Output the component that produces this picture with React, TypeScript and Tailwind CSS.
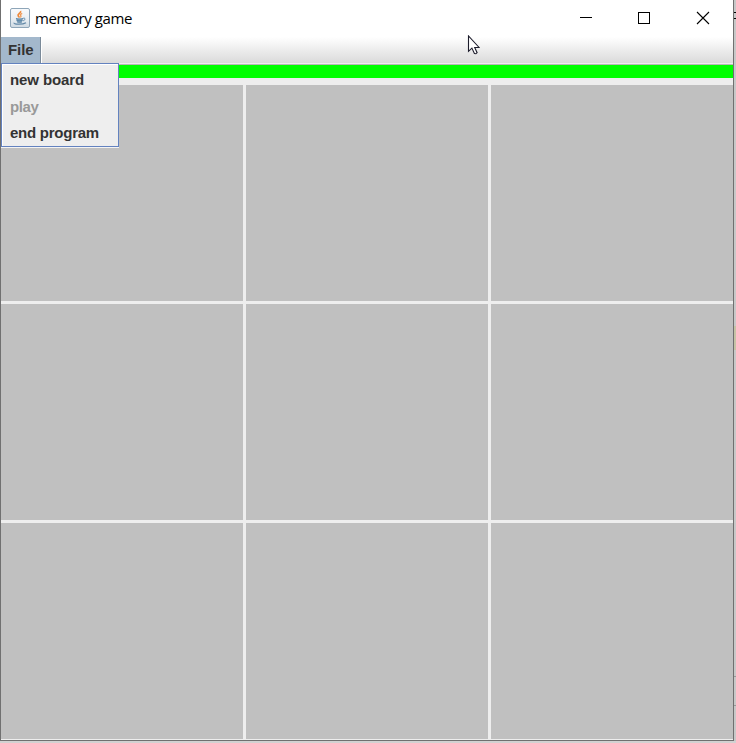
function JavaIcon() {
  return (
    <svg width="20" height="20" viewBox="0 0 20 20" fill="none">
      <defs>
        <linearGradient id="tile" x1="0" y1="0" x2="0" y2="1">
          <stop offset="0" stopColor="#f8fafc" />
          <stop offset="0.55" stopColor="#e9eef3" />
          <stop offset="1" stopColor="#ced9e2" />
        </linearGradient>
      </defs>
      <rect x="0.5" y="0.5" width="19" height="19" rx="1.5" fill="url(#tile)" stroke="#8ea5b8" />
      <path d="M10.5 3c1.2 2-3.3 2.8-2.4 4.6.3.8 1 1.2 1.2 2" stroke="#ee8a3c" strokeWidth="1.7" />
      <path d="M12.2 5.3c-1.6.8-2.2 1.5-1.4 2.4.4.6.2 1.2-.4 1.7" stroke="#f09a58" strokeWidth="1.3" />
      <path d="M6 10.3c2 .7 5 .6 7 0l-1 3.6c-1.6.6-3.4.6-5 0z" fill="#8fabc1" />
      <path d="M6 10.5c2 .7 5 .6 7 0M6.6 12.3c2 .7 4 .6 6 0M7.2 13.9c1.5.5 3.2.5 4.7 0" stroke="#5f88a8" strokeWidth="1.1" />
      <path d="M13.2 10.2c2.4-.6 2.4 1.8 0 2.6" stroke="#5f88a8" />
      <path d="M4.2 14.8c-1 1.8 8.6 2 11.8-.1" stroke="#6288a7" strokeWidth="1.3" />
    </svg>
  );
}

function WindowControls() {
  return (
    <div className="flex">
      <svg width="58" height="36" viewBox="0 0 58 36" shapeRendering="crispEdges">
        <path d="M21 17.5h12" stroke="#000" />
      </svg>
      <svg width="58" height="36" viewBox="0 0 58 36" shapeRendering="crispEdges">
        <rect x="21.5" y="12.5" width="11" height="11" fill="none" stroke="#000" />
      </svg>
      <svg width="58" height="36" viewBox="0 0 58 36">
        <path d="M22 12l12 12M34 12L22 24" stroke="#000" strokeWidth="1.1" />
      </svg>
    </div>
  );
}

function FileMenu() {
  return (
    <div className="absolute left-0 top-[26px] z-10 h-[85px] w-[118px] border-b border-[#f4f4f4] font-['Liberation_Sans',Arial,sans-serif] text-[15px] font-bold leading-[17px] text-[#333333]">
      <div className="flex h-[84px] flex-col border border-[#6382bf] bg-[#eeeeee] pl-2 pt-[7px] shadow-[inset_1px_1px_0_#ffffff]">
        <div className="h-[27px] whitespace-nowrap tracking-[-0.1px]">new board</div>
        <div className="h-[26px] whitespace-nowrap tracking-[-0.4px] text-[#999999]">play</div>
        <div className="whitespace-nowrap tracking-[-0.25px]">end program</div>
      </div>
    </div>
  );
}

function Pointer() {
  return (
    <svg className="absolute left-[466px] top-[-2px]" width="13" height="20" viewBox="0 0 13 20">
      <path
        d="M1.5 1v15.3l3.4-3.2 2.5 5.4 1.5.2 1.2-1-2.4-5.2h4.4z"
        fill="#fff"
        stroke="#1c1c2b"
        strokeWidth="1.1"
      />
    </svg>
  );
}

export default function App() {
  return (
    <div className="flex h-[743px] w-[736px] flex-col overflow-hidden bg-[#d2d2d2]">
      <div className="flex h-[741px]">
        <div className="flex w-[734px] flex-col border-x border-b border-[#707070] bg-[#eeeeee]">
          <div className="flex h-[37px] items-start justify-between bg-white">
            <div className="flex pl-[9px] pt-2">
              <JavaIcon />
              <span className="ml-[5px] whitespace-nowrap font-['Open_Sans','Noto_Sans',sans-serif] text-[15px] leading-5 tracking-[-0.42px] text-black">
                memory game
              </span>
            </div>
            <WindowControls />
          </div>
          <div className="relative flex h-7 border-b border-[#b8b8b8] bg-[linear-gradient(#ffffff,#dadada_26px,#eeeeee_26px)]">
            <div className="h-[26px] w-[39px] bg-[#a3b8cc] pl-[7px] pt-1 font-['Liberation_Sans',Arial,sans-serif] text-[15px] font-bold leading-[17px] tracking-[-0.1px] text-[#333333] shadow-[1px_0_0_#7a8a99,2px_0_0_#ffffff]">
              File
            </div>
            <FileMenu />
            <Pointer />
          </div>
          <div className="h-[13px] bg-[#00ff00]" />
          <div className="mt-[7px] grid grid-cols-3 grid-rows-[216px_216px_216px] gap-[3px]">
            {Array.from({ length: 9 }, (_, i) => (
              <div key={i} className="bg-[#c0c0c0]" />
            ))}
          </div>
        </div>
        <div className="flex w-0.5 flex-col bg-[#c8c8c8]">
          <div className="mt-3 h-[7px] border-y border-black" />
          <div className="mt-[307px] h-6 bg-[#c6c3a6]" />
          <div className="mt-[326px] h-[30px] border-y border-[#999999]" />
        </div>
      </div>
    </div>
  );
}
